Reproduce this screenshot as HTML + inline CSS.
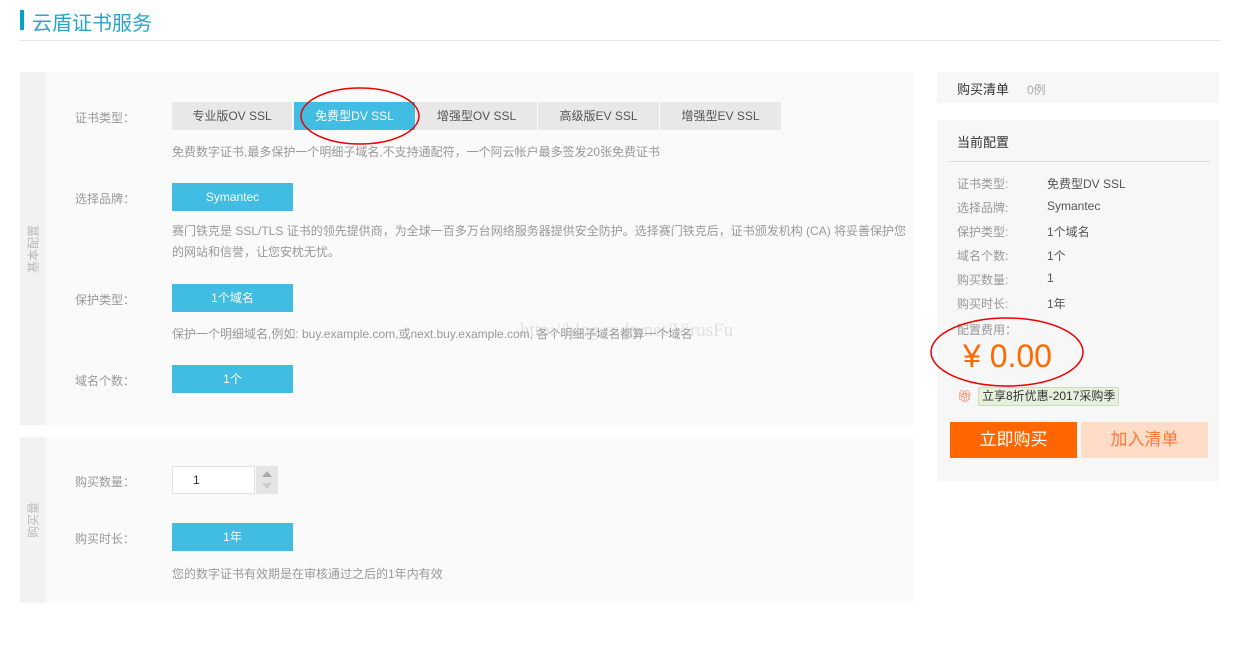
<!DOCTYPE html>
<html><head><meta charset="utf-8"><style>
*{margin:0;padding:0;box-sizing:border-box}
body{width:1244px;height:645px;background:#fff;position:relative;overflow:hidden;font-family:"Liberation Sans","Noto Sans CJK SC",sans-serif;font-size:12px;color:#999}
.a{position:absolute;white-space:nowrap}
.btn{position:absolute;height:28px;line-height:28px;text-align:center;font-size:12px}
.g{background:#e8e8e8;color:#555}
.b{background:#41bde3;color:#fff}
.lbl{position:absolute;color:#999;font-size:12px}
.side{position:absolute;left:20px;width:26px;background:#f2f2f2}
.side span{position:absolute;left:50%;top:50%;transform:translate(-50%,-50%) rotate(-90deg);color:#bbb;font-size:12px;white-space:nowrap}
.rl{position:absolute;left:957px;color:#999}
.rv{position:absolute;left:1047px;color:#555}
</style></head><body>
<div class="a" style="left:20px;top:10px;width:4px;height:20px;background:#00a2ca"></div>
<div class="a" style="left:32px;top:7px;font-size:20px;color:#2aa5c8">云盾证书服务</div>
<div class="a" style="left:20px;top:40px;width:1200px;height:1px;background:#e5e5e5"></div>

<div class="a" style="left:20px;top:72px;width:893px;height:353px;background:#fafafa"></div>
<div class="side" style="top:72px;height:353px"><span>基本配置</span></div>
<div class="lbl" style="left:75px;top:109px">证书类型：</div>
<div class="btn g" style="left:172px;top:102px;width:120px">专业版OV SSL</div>
<div class="btn b" style="left:294px;top:102px;width:121px">免费型DV SSL</div>
<div class="btn g" style="left:416px;top:102px;width:121px">增强型OV SSL</div>
<div class="btn g" style="left:538px;top:102px;width:121px">高级版EV SSL</div>
<div class="btn g" style="left:660px;top:102px;width:121px">增强型EV SSL</div>
<div class="a" style="left:172px;top:143px">免费数字证书,最多保护一个明细子域名,不支持通配符，一个阿云帐户最多签发20张免费证书</div>
<div class="lbl" style="left:75px;top:190px">选择品牌：</div>
<div class="btn b" style="left:172px;top:183px;width:121px">Symantec</div>
<div class="a" style="left:172px;top:221px;line-height:21px">赛门铁克是 SSL/TLS 证书的领先提供商，为全球一百多万台网络服务器提供安全防护。选择赛门铁克后，证书颁发机构 (CA) 将妥善保护您<br>的网站和信誉，让您安枕无忧。</div>
<div class="lbl" style="left:75px;top:291px">保护类型：</div>
<div class="btn b" style="left:172px;top:284px;width:121px">1个域名</div>
<div class="a" style="left:172px;top:325px">保护一个明细域名,例如: buy.example.com,或next.buy.example.com, 各个明细子域名都算一个域名</div>
<div class="a" style="left:520px;top:320px;font-family:'Liberation Serif',serif;font-size:19px;color:rgba(170,170,170,0.3)">http://blog.csdn.net/VirusFu</div>
<div class="lbl" style="left:75px;top:372px">域名个数：</div>
<div class="btn b" style="left:172px;top:365px;width:121px">1个</div>

<div class="a" style="left:20px;top:437px;width:893px;height:166px;background:#fafafa"></div>
<div class="side" style="top:437px;height:166px"><span>购买量</span></div>
<div class="lbl" style="left:75px;top:473px">购买数量：</div>
<div class="a" style="left:172px;top:466px;width:83px;height:28px;background:#fff;border:1px solid #e3e3e3;color:#333;padding-left:20px;line-height:26px">1</div>
<div class="a" style="left:256px;top:466px;width:22px;height:28px;background:#e5e5e5"></div>
<div class="a" style="left:262px;top:471px;border-left:5px solid transparent;border-right:5px solid transparent;border-bottom:6px solid #aaa"></div>
<div class="a" style="left:262px;top:483px;border-left:5px solid transparent;border-right:5px solid transparent;border-top:6px solid #ccc"></div>
<div class="lbl" style="left:75px;top:530px">购买时长：</div>
<div class="btn b" style="left:172px;top:523px;width:121px">1年</div>
<div class="a" style="left:172px;top:565px">您的数字证书有效期是在审核通过之后的1年内有效</div>

<div class="a" style="left:937px;top:72px;width:282px;height:31px;background:#f7f7f7"></div>
<div class="a" style="left:957px;top:79px;font-size:13px;color:#333">购买清单</div>
<div class="a" style="left:1027px;top:81px;color:#aaa">0例</div>
<div class="a" style="left:937px;top:120px;width:282px;height:361px;background:#f7f7f7"></div>
<div class="a" style="left:957px;top:132px;font-size:13px;color:#333">当前配置</div>
<div class="a" style="left:948px;top:161px;width:262px;height:1px;background:#ddd"></div>
<div class="rl" style="top:175px">证书类型:</div><div class="rv" style="top:175px">免费型DV SSL</div>
<div class="rl" style="top:199px">选择品牌:</div><div class="rv" style="top:199px">Symantec</div>
<div class="rl" style="top:223px">保护类型:</div><div class="rv" style="top:223px">1个域名</div>
<div class="rl" style="top:247px">域名个数:</div><div class="rv" style="top:247px">1个</div>
<div class="rl" style="top:271px">购买数量:</div><div class="rv" style="top:271px">1</div>
<div class="rl" style="top:295px">购买时长:</div><div class="rv" style="top:295px">1年</div>
<div class="rl" style="top:321px">配置费用：</div>
<div class="a" style="left:963px;top:338px;font-size:32px;color:#ff6a00">¥ 0.00</div>
<div class="a" style="left:957px;top:389px;color:#f08060;font-size:12px">🎁︎</div>
<div class="a" style="left:978px;top:387px;height:19px;line-height:17px;padding:0 3px;background:#e6f0dc;border:1px solid #c9dfb9;color:#333;font-size:12px;border-radius:2px">立享8折优惠-2017采购季</div>
<div class="btn" style="left:950px;top:422px;width:127px;height:36px;line-height:36px;background:#ff6600;color:#fff;font-size:17px">立即购买</div>
<div class="btn" style="left:1081px;top:422px;width:127px;height:36px;line-height:36px;background:#ffdcc8;color:#ff7a3a;font-size:17px">加入清单</div>

<svg class="a" style="left:0;top:0" width="1244" height="645">
<ellipse cx="360" cy="116" rx="59" ry="28" fill="none" stroke="#e00" stroke-width="1.5"/>
<ellipse cx="1007" cy="352" rx="76" ry="34" fill="none" stroke="#e00" stroke-width="1.5"/>
</svg>
</body></html>
